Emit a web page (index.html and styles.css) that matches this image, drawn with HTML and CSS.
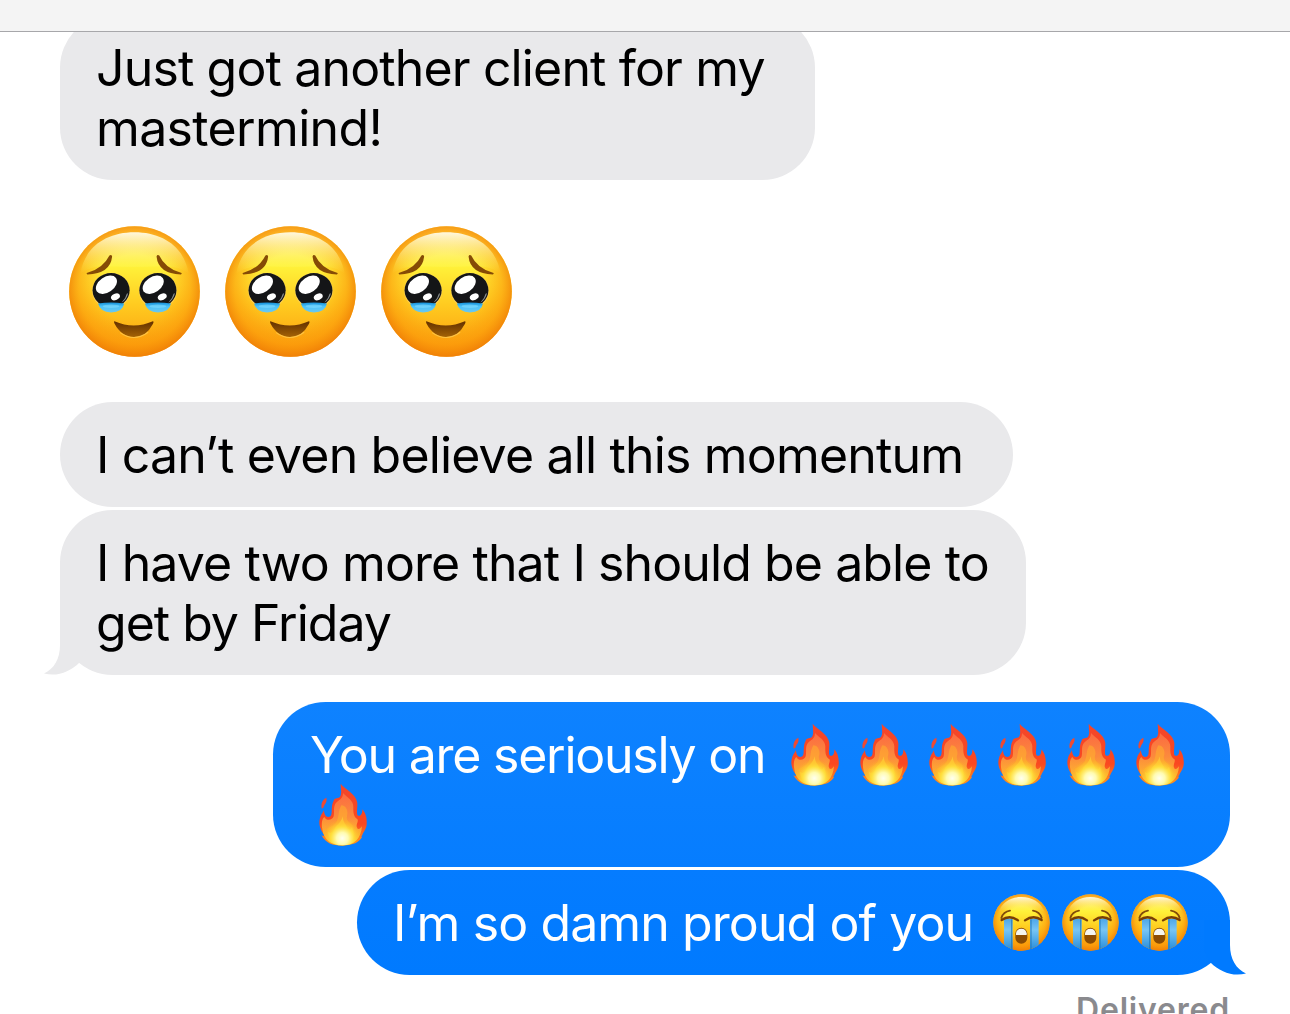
FILE: index.html
```html
<!DOCTYPE html>
<html lang="en">
<head>
<meta charset="utf-8">
<title>Messages</title>
<link rel="stylesheet" href="styles.css">
</head>
<body>
<svg class="sprites" width="0" height="0" aria-hidden="true">
  <defs>
    <linearGradient id="skin" x1="0" y1="0" x2="0" y2="1">
      <stop offset="0" stop-color="#ffd84a"/><stop offset=".3" stop-color="#fff23a"/><stop offset=".6" stop-color="#ffcb20"/><stop offset="1" stop-color="#fb970b"/>
    </linearGradient>
    <radialGradient id="rim" cx=".5" cy=".48" r=".53">
      <stop offset=".5" stop-color="#fb9a09" stop-opacity="0"/><stop offset=".8" stop-color="#fb9608" stop-opacity=".55"/><stop offset="1" stop-color="#ee7c06" stop-opacity=".95"/>
    </radialGradient>
    <linearGradient id="shine" x1="0" y1="0" x2="0" y2="1">
      <stop offset="0" stop-color="#fffbe8" stop-opacity=".95"/><stop offset="1" stop-color="#fffb60" stop-opacity="0"/>
    </linearGradient>
    <linearGradient id="tear" x1="0" y1="0" x2="0" y2="1">
      <stop offset="0" stop-color="#1590d8"/><stop offset=".4" stop-color="#4cc3fa"/><stop offset="1" stop-color="#6cc8ee"/>
    </linearGradient>
    <linearGradient id="mouth" x1="0" y1="0" x2="0" y2="1">
      <stop offset="0" stop-color="#633000"/><stop offset="1" stop-color="#a36205"/>
    </linearGradient>
    <linearGradient id="stream" x1="0" y1="0" x2="0" y2="1">
      <stop offset="0" stop-color="#4ca5e8"/><stop offset=".35" stop-color="#78c5f5"/><stop offset="1" stop-color="#238ad9"/>
    </linearGradient>
    <linearGradient id="flameOuter" x1="0" y1="0" x2="0" y2="1">
      <stop offset="0" stop-color="#f3462b"/><stop offset=".65" stop-color="#fa4820"/><stop offset="1" stop-color="#ff9b1f"/>
    </linearGradient>
    <linearGradient id="flameMid" x1="0" y1="0" x2="0" y2="1">
      <stop offset="0" stop-color="#fb6a42"/><stop offset=".45" stop-color="#fc8a3c"/><stop offset="1" stop-color="#ffca28"/>
    </linearGradient>
    <radialGradient id="flameCore" cx="103" cy="190" r="58" gradientUnits="userSpaceOnUse">
      <stop offset="0" stop-color="#fffff0"/><stop offset=".3" stop-color="#fffbb0"/><stop offset=".6" stop-color="#ffe33e" stop-opacity=".8"/><stop offset="1" stop-color="#ffb41e" stop-opacity="0"/>
    </radialGradient>
    <g id="eye">
      <ellipse cx="168" cy="229" rx="57" ry="54" fill="#ffd78a" opacity=".5"/>
      <ellipse cx="168" cy="227" rx="55.500" ry="51" fill="#141517"/>
      <path d="M219 236Q215 254 199 265Q212 252 215 238Z" fill="#8b9093"/>
      <ellipse cx="154" cy="211" rx="35" ry="23" transform="rotate(-35 154 211)" fill="#fff"/>
      <ellipse cx="181" cy="247" rx="14" ry="9.500" transform="rotate(-25 181 247)" fill="#fff"/>
      <path d="M129 267Q168 261 207 267Q203 293 168 294Q135 293 129 267Z" fill="url(#tear)"/>
      <ellipse cx="168" cy="275" rx="25" ry="5" fill="#8be0ff" opacity=".5"/>
    </g>
    <symbol id="holding-tears" viewBox="42 35 392 392">
      <circle cx="238" cy="231" r="195.500" fill="url(#skin)"/>
      <circle cx="238" cy="231" r="195.500" fill="url(#rim)"/>
      <path d="M76 178C88 98 154 54 238 54C322 54 388 98 400 178C359 144 304 158 238 158C172 158 119 144 76 178Z" fill="url(#shine)"/>
      <use href="#eye"/><use href="#eye" x="140"/>
      <path d="M95 176Q144 162 163 123Q169 119 171 126Q166 177 97 180Q94 179 95 176Z" fill="#854b06"/>
      <path d="M379 176Q330 162 312 123Q306 119 304 126Q309 177 377 180Q380 179 379 176Z" fill="#854b06"/>
      <path d="M178 320Q236 345 293 320Q297 320 293 328Q273 367 237 367Q199 367 178 327Q175 320 178 320Z" fill="url(#mouth)"/>
      <path d="M195 354Q236 384 279 353" fill="none" stroke="#ffd05a" stroke-width="3" opacity=".7"/>
    </symbol>
    <symbol id="sobbing" viewBox="38 27 171 171">
      <clipPath id="faceClip"><circle cx="123.500" cy="112.500" r="84.500"/></clipPath>
      <circle cx="123.500" cy="112.500" r="84.500" fill="url(#skin)"/>
      <circle cx="123.500" cy="112.500" r="84.500" fill="url(#rim)"/>
      <path d="M54 82C66 51 91 36 123 36C156 36 181 51 193 82C172 68 151 78 123 78C96 78 75 68 54 82Z" fill="url(#shine)"/>
      <g clip-path="url(#faceClip)">
        <path d="M71 103Q84 98 97 103V198H71ZM149 103Q162 98 175 103V198H149Z" fill="url(#stream)"/>
        <path d="M94 103V198M152 103V198" stroke="#2377b7" stroke-width="4" opacity=".7"/>
      </g>
      <path d="M63 99Q69 80 89 77M184 99Q178 80 158 77" fill="none" stroke="#824c0b" stroke-width="5.500" stroke-linecap="round"/>
      <path d="M64 105Q88 88 113 106M134 106Q159 88 184 105" fill="none" stroke="#793e05" stroke-width="7" stroke-linecap="round"/>
      <rect x="105" y="128" width="36" height="48" rx="18" fill="#8b4c03"/>
      <path d="M107 150V145Q109 131 123 131Q137 131 139 145V150Z" fill="#f5f5ee"/>
    </symbol>
    <symbol id="fire" viewBox="30 24 150 190">
      <path d="M98 26C109 42 146 57 148 84C149 98 145 109 148 120C157 128 164 116 163 103C173 113 178 132 176 149C174 165 164 173 163 180Q158 185 162 187C153 202 136 211 104 212C72 212 55 205 40 181Q46 184 50 181C39 169 31 150 35 133C37 119 46 111 48 105C48 119 56 131 67 124C75 116 67 95 77 77C79 69 87 71 95 67C103 56 98 42 98 26Z" fill="url(#flameOuter)"/>
      <path d="M55 68C58 84 50 85 48 93Q46 102 41 100C38 84 45 73 55 68Z" fill="#ef4a32"/>
      <path d="M105 54C116 67 137 75 136 96C135 113 138 128 148 132C153 139 143 148 147 158C151 168 159 158 162 154C159 189 142 210 104 211C68 210 47 194 43 163C39 144 43 130 49 126C56 139 73 136 77 124C80 110 75 97 83 85C90 75 105 74 105 54Z" fill="url(#flameMid)"/>
      <path d="M100 91C114 91 122 108 117 123C114 143 131 142 138 158C145 190 128 208 104 210C76 209 59 195 55 168C59 153 78 157 87 137C94 120 90 108 100 91Z" fill="#ffb52b" opacity=".5"/>
      <path d="M104 124C105 145 116 148 119 163Q128 165 132 155C145 188 130 210 104 211C76 210 61 194 60 170Q71 179 78 166C83 149 99 147 104 124Z" fill="#ffe339" opacity=".5"/>
      <path d="M43 161Q104 92 161 161C157 191 138 211 104 211C68 211 48 194 43 161Z" fill="url(#flameCore)"/>
    </symbol>
  </defs>
</svg>
<div class="screen">
  <header class="topbar"></header>
  <main class="thread">
    <div class="bubble received first">
      <p class="line l1"><span>Just got another client for my</span></p>
      <p class="line l2"><span>mastermind!</span></p>
    </div>
    <div class="big-emoji">
      <svg><use href="#holding-tears"/></svg><svg><use href="#holding-tears"/></svg><svg><use href="#holding-tears"/></svg>
    </div>
    <div class="bubble received momentum">
      <p class="line l3"><span>I can’t even believe all this momentum</span></p>
    </div>
    <div class="bubble received friday">
      <p class="line l4"><span>I have two more that I should be able to</span></p>
      <p class="line l5"><span>get by Friday</span></p>
      <svg class="tail tail-left" viewBox="0 0 42 56"><path d="M16 0V25C16 39 10 49 0 53.500C13 57 26 52 35.500 42.500L42 30V0Z"/></svg>
    </div>
    <div class="bubble sent on-fire">
      <p class="line l6"><span>You are seriously on</span><span class="fires"><svg><use href="#fire"/></svg><svg><use href="#fire"/></svg><svg><use href="#fire"/></svg><svg><use href="#fire"/></svg><svg><use href="#fire"/></svg><svg><use href="#fire"/></svg></span></p>
      <p class="line"><span class="fires wrapped"><svg><use href="#fire"/></svg></span></p>
    </div>
    <div class="bubble sent proud">
      <p class="line l7"><span>I’m so damn proud of you</span><span class="sobs"><svg><use href="#sobbing"/></svg><svg><use href="#sobbing"/></svg><svg><use href="#sobbing"/></svg></span></p>
      <svg class="tail tail-right" viewBox="0 0 42 56"><path d="M26 0V25C26 39 32 49 42 53.500C29 57 16 52 6.500 42.500L0 30V0Z"/></svg>
    </div>
    <div class="status">Delivered</div>
  </main>
</div>
</body>
</html>
```
FILE: styles.css
```css
* { box-sizing: border-box; }
body { margin: 0; background: #fff; font-family: Inter, "Liberation Sans", sans-serif; }
.sprites { position: absolute; }
.screen { display: flex; flex-direction: column; height: 1014px; overflow: hidden; }
.topbar { flex: none; height: 32px; background: #f4f4f4; border-bottom: 1px solid #a7a7aa; }
.thread { flex: 1; min-height: 0; overflow: hidden; display: flex; flex-direction: column; align-items: flex-start; padding: 0 60px; }
.bubble { position: relative; flex: none; border-radius: 52.5px; padding: 22.5px 37px 22.5px 36px; font-size: 50px; line-height: 60px; }
.received { background: #e9e9eb; color: #000; }
.sent { align-self: flex-end; color: #fff; }
.first { width: 755px; margin-top: -17px; }
.momentum { width: 953px; margin-top: 45px; }
.friday { width: 966px; margin-top: 3px; }
.on-fire { width: 957px; margin-top: 27px; padding-left: 37px; background: linear-gradient(#0e82ff, #067dff); }
.proud { width: 873px; margin-top: 3px; background: linear-gradient(#057cff, #007aff); }
.line { display: flex; height: 60px; margin: 0; white-space: nowrap; }
.l1 { letter-spacing: -0.86px; }
.l2 { letter-spacing: -0.65px; }
.l3 { letter-spacing: -0.83px; }
.l4 { letter-spacing: -0.9px; }
.l5 { letter-spacing: -1px; }
.l6 { letter-spacing: -1.25px; }
.l7 { letter-spacing: -0.9px; }
.big-emoji { flex: none; display: flex; gap: 25px; margin: 46px 0 0 9px; }
.big-emoji svg { width: 131px; height: 131px; }
.fires { display: flex; gap: 19px; margin-left: auto; margin-right: 8px; margin-top: -2px; }
.fires svg { width: 50px; height: 63.3px; }
.wrapped { margin-left: 8px; }
.sobs { display: flex; gap: 12px; margin-left: auto; margin-right: 5px; margin-top: 1.5px; }
.sobs svg { width: 57px; height: 57px; }
.tail { position: absolute; bottom: -1px; width: 42px; height: 56px; }
.tail-left { left: -16px; fill: #e9e9eb; }
.tail-right { right: -16px; fill: #007aff; }
.status { align-self: flex-end; flex: none; margin: 15px 0 0; font-size: 32px; line-height: 40px; font-weight: 600; letter-spacing: 0.8px; color: #8a8a8e; }
```
